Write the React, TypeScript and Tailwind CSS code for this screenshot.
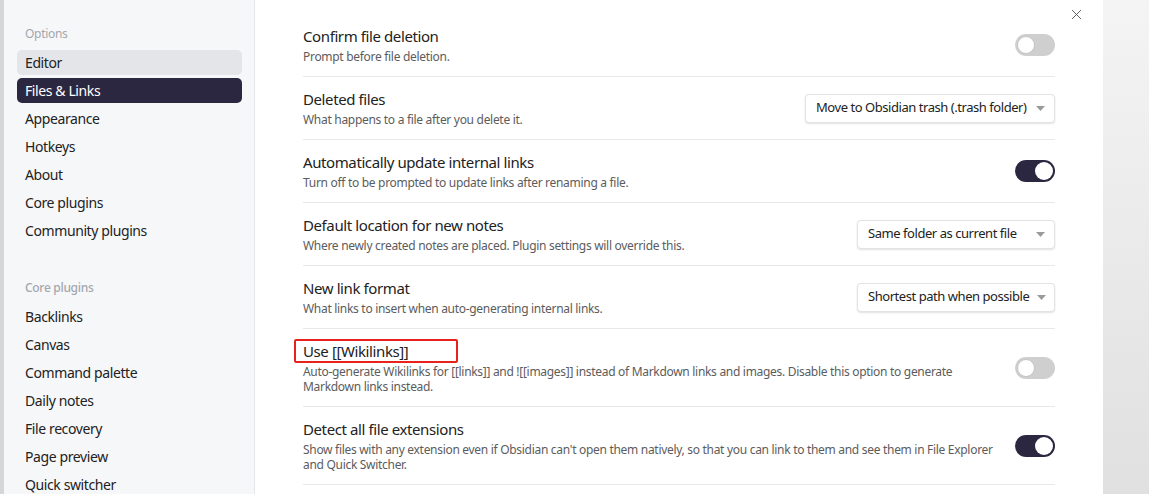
import { X } from "lucide-react";

type Row = {
  title: string;
  desc: string;
  control: "off" | "on" | string;
  width?: string;
  highlight?: boolean;
};

const rows: Row[] = [
  { title: "Confirm file deletion", desc: "Prompt before file deletion.", control: "off" },
  {
    title: "Deleted files",
    desc: "What happens to a file after you delete it.",
    control: "Move to Obsidian trash (.trash folder)",
    width: "w-[250px]",
  },
  {
    title: "Automatically update internal links",
    desc: "Turn off to be prompted to update links after renaming a file.",
    control: "on",
  },
  {
    title: "Default location for new notes",
    desc: "Where newly created notes are placed. Plugin settings will override this.",
    control: "Same folder as current file",
    width: "w-[198px]",
  },
  {
    title: "New link format",
    desc: "What links to insert when auto-generating internal links.",
    control: "Shortest path when possible",
    width: "w-[198px]",
  },
  {
    title: "Use [[Wikilinks]]",
    desc: "Auto-generate Wikilinks for [[links]] and ![[images]] instead of Markdown links and images. Disable this option to generate Markdown links instead.",
    control: "off",
    highlight: true,
  },
  {
    title: "Detect all file extensions",
    desc: "Show files with any extension even if Obsidian can't open them natively, so that you can link to them and see them in File Explorer and Quick Switcher.",
    control: "on",
  },
  {
    title: "Attachment folder path",
    desc: "Place newly created attachment files, such as images created via drag-and-drop or audio recordings, in this folder.",
    control: "off",
  },
];

const options = ["Editor", "Files & Links", "Appearance", "Hotkeys", "About", "Core plugins", "Community plugins"];
const plugins = ["Backlinks", "Canvas", "Command palette", "Daily notes", "File recovery", "Page preview", "Quick switcher", "Search"];

function Toggle({ on }: { on: boolean }) {
  return (
    <div
      className={`flex h-[22px] w-[40px] items-center rounded-full px-[2px] ${
        on ? "justify-end bg-[#2c2741]" : "justify-start bg-[#cfcfcf]"
      }`}
    >
      <div className={`h-[18px] w-[18px] rounded-full bg-white ${on ? "" : "border border-[#c4c4c4]"}`} />
    </div>
  );
}

function Dropdown({ value, width }: { value: string; width?: string }) {
  return (
    <div
      className={`flex h-[29px] items-center gap-2 rounded-[4px] border border-[#e3e3e3] bg-white pl-[10px] pr-[9px] text-[13px] tracking-[-0.45px] text-[#222] shadow-[0_1px_2px_rgba(0,0,0,0.12)] ${
        width ?? ""
      }`}
    >
      <span className="flex-1 whitespace-nowrap">{value}</span>
      <svg width="9" height="5" viewBox="0 0 9 5" className="shrink-0">
        <path d="M0 0 L9 0 L4.5 5 Z" fill="#9a9a9a" />
      </svg>
    </div>
  );
}

function SideItem({ label, active, hover }: { label: string; active?: boolean; hover?: boolean }) {
  return (
    <div
      className={`flex h-[25px] items-center rounded-[5px] px-2 text-[14px] tracking-[-0.4px] ${
        active ? "bg-[#2c2741] text-white" : hover ? "bg-[#e3e5e8] text-[#222]" : "text-[#222]"
      }`}
    >
      {label}
    </div>
  );
}

export default function App() {
  return (
    <div
      className="flex h-[494px] w-[1149px] overflow-hidden bg-white"
      style={{ fontFamily: '"Noto Sans", "Open Sans", sans-serif' }}
    >
      <div className="w-[4px] shrink-0 bg-[#d6d6d6]" />

      <aside className="flex w-[251px] shrink-0 flex-col border-r border-[#e6e7ea] bg-[#f6f7f9] pl-[13px] pr-[12px] pt-[25px]">
        <div className="mb-[7px] px-2 text-[12px] tracking-[-0.3px] text-[#a3a7ae]">Options</div>
        <div className="flex flex-col gap-[3px]">
          {options.map((o) => (
            <SideItem key={o} label={o} active={o === "Files & Links"} hover={o === "Editor"} />
          ))}
        </div>
        <div className="mb-[7px] mt-[36px] px-2 text-[12px] font-medium tracking-[-0.3px] text-[#a3a7ae]">
          Core plugins
        </div>
        <div className="flex flex-col gap-[3px]">
          {plugins.map((p) => (
            <SideItem key={p} label={p} />
          ))}
        </div>
      </aside>

      <main className="relative w-[848px] shrink-0 bg-white pl-[48px] pr-[48px] pt-[14px]">
        <button className="absolute right-[18px] top-[6px] text-[#555]">
          <X className="h-[17px] w-[17px]" strokeWidth={1.3} />
        </button>
        {rows.map((r) => (
          <div key={r.title} className="flex items-center gap-1 border-b border-[#e8e8e8] py-3">
            <div className="relative flex min-w-0 max-w-[692px] flex-1 flex-col gap-[3px]">
              <div className="text-[15px] leading-5 tracking-[-0.4px] text-[#222]">{r.title}</div>
              <div className="text-[12px] leading-[15px] tracking-[-0.3px] text-[#5c5c5c]">{r.desc}</div>
              {r.highlight && (
                <div className="absolute left-[-9px] top-[-2px] h-[24px] w-[164px] rounded-[2px] border-2 border-[#e8221c]" />
              )}
            </div>
            <div className="ml-auto flex shrink-0 items-center">
              {r.control === "on" || r.control === "off" ? (
                <Toggle on={r.control === "on"} />
              ) : (
                <Dropdown value={r.control} width={r.width} />
              )}
            </div>
          </div>
        ))}
      </main>

      <div className="flex-1 bg-gradient-to-b from-[#f4f4f4] to-[#e0e0e0]" />
    </div>
  );
}
